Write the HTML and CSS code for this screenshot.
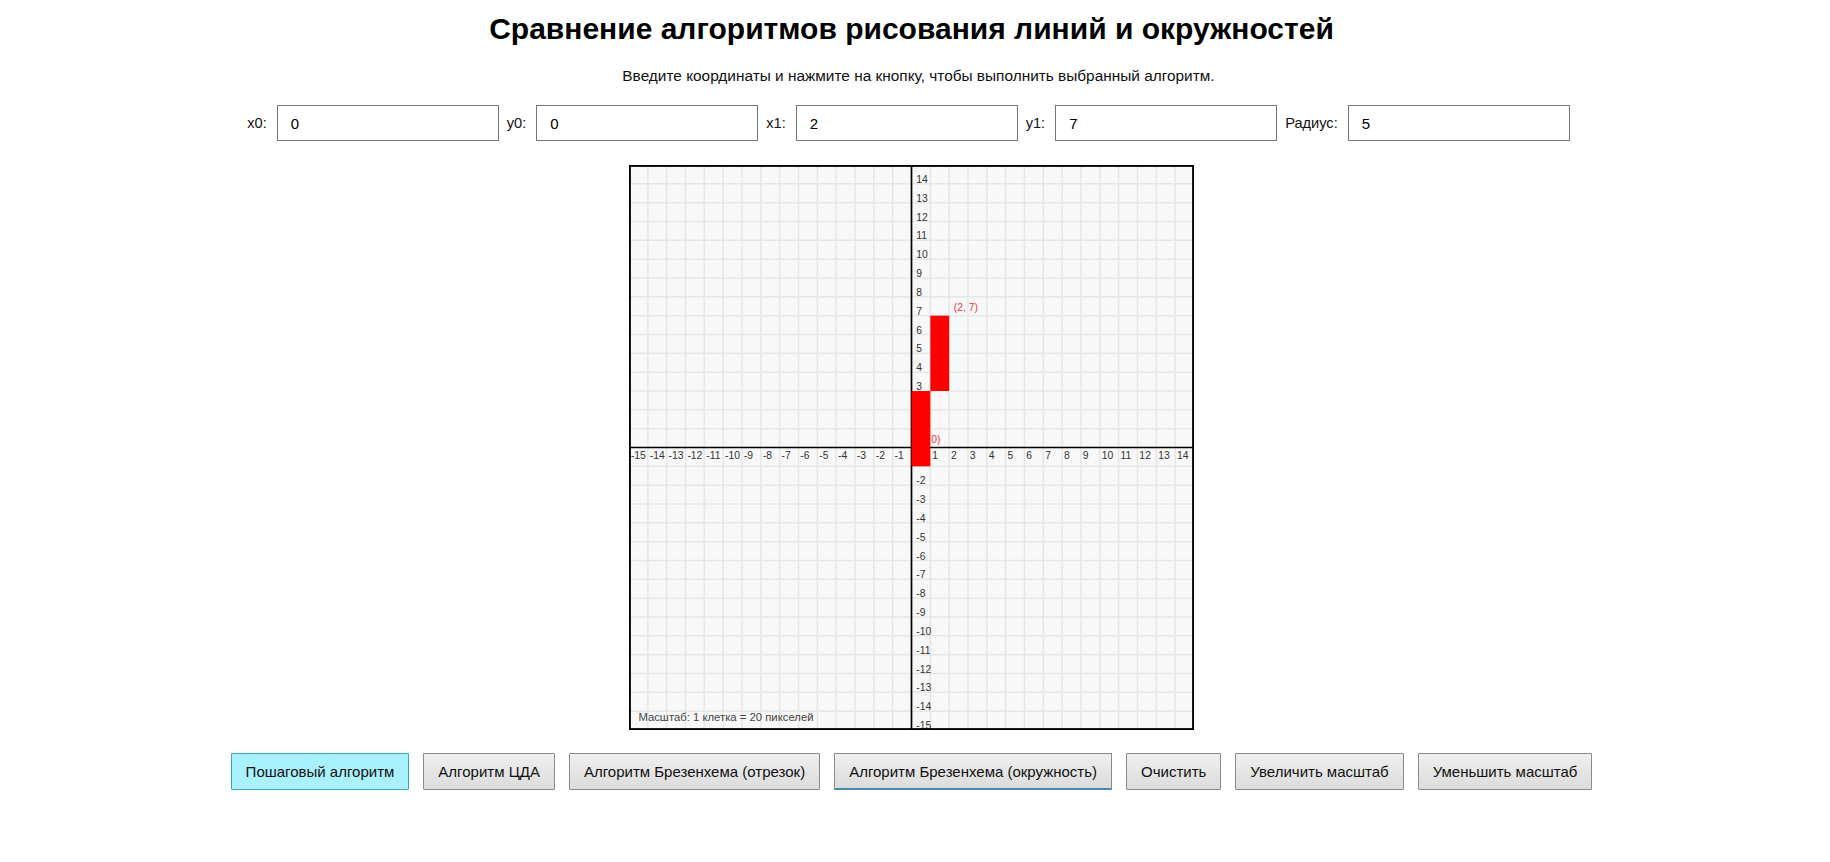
FILE: index.html
```html
<!DOCTYPE html>
<html lang="ru">
<head>
<meta charset="utf-8">
<title>Сравнение алгоритмов</title>
<link rel="stylesheet" href="styles.css">
</head>
<body>
<div class="page">
  <h1 class="title">Сравнение алгоритмов рисования линий и окружностей</h1>
  <p class="subtitle">Введите координаты и нажмите на кнопку, чтобы выполнить выбранный алгоритм.</p>
  <div class="inputs">
    <label class="lbl">x0:</label><input class="field" type="text" value="0">
    <label class="lbl">y0:</label><input class="field" type="text" value="0">
    <label class="lbl">x1:</label><input class="field" type="text" value="2">
    <label class="lbl">y1:</label><input class="field" type="text" value="7">
    <label class="lbl">Радиус:</label><input class="field" type="text" value="5">
  </div>
  <div class="canvas-wrap">
    <svg class="plot" viewBox="0 0 600 600" width="565" height="565">
      <rect x="0" y="0" width="600" height="600" fill="#f8f8f8"/>
      <path stroke="#e6e6e6" stroke-width="1.6" fill="none" d="M20 0V600M40 0V600M60 0V600M80 0V600M100 0V600M120 0V600M140 0V600M160 0V600M180 0V600M200 0V600M220 0V600M240 0V600M260 0V600M280 0V600M320 0V600M340 0V600M360 0V600M380 0V600M400 0V600M420 0V600M440 0V600M460 0V600M480 0V600M500 0V600M520 0V600M540 0V600M560 0V600M580 0V600M0 20H600M0 40H600M0 60H600M0 80H600M0 100H600M0 120H600M0 140H600M0 160H600M0 180H600M0 200H600M0 220H600M0 240H600M0 260H600M0 280H600M0 320H600M0 340H600M0 360H600M0 380H600M0 400H600M0 420H600M0 440H600M0 460H600M0 480H600M0 500H600M0 520H600M0 540H600M0 560H600M0 580H600"/>
      <path stroke="#000" stroke-width="1.8" d="M300 0V600M0 300H600"/>
      <g class="ax" font-size="11" fill="#333">
        <text x="2" y="312">-15</text><text x="22" y="312">-14</text><text x="42" y="312">-13</text><text x="62" y="312">-12</text><text x="82" y="312">-11</text><text x="102" y="312">-10</text><text x="122" y="312">-9</text><text x="142" y="312">-8</text><text x="162" y="312">-7</text><text x="182" y="312">-6</text><text x="202" y="312">-5</text><text x="222" y="312">-4</text><text x="242" y="312">-3</text><text x="262" y="312">-2</text><text x="282" y="312">-1</text><text x="302" y="312">0</text><text x="322" y="312">1</text><text x="342" y="312">2</text><text x="362" y="312">3</text><text x="382" y="312">4</text><text x="402" y="312">5</text><text x="422" y="312">6</text><text x="442" y="312">7</text><text x="462" y="312">8</text><text x="482" y="312">9</text><text x="502" y="312">10</text><text x="522" y="312">11</text><text x="542" y="312">12</text><text x="562" y="312">13</text><text x="582" y="312">14</text>
        <text x="305" y="19">14</text><text x="305" y="39">13</text><text x="305" y="59">12</text><text x="305" y="79">11</text><text x="305" y="99">10</text><text x="305" y="119">9</text><text x="305" y="139">8</text><text x="305" y="159">7</text><text x="305" y="179">6</text><text x="305" y="199">5</text><text x="305" y="219">4</text><text x="305" y="239">3</text><text x="305" y="259">2</text><text x="305" y="279">1</text><text x="305" y="299">0</text><text x="305" y="319">-1</text><text x="305" y="339">-2</text><text x="305" y="359">-3</text><text x="305" y="379">-4</text><text x="305" y="399">-5</text><text x="305" y="419">-6</text><text x="305" y="439">-7</text><text x="305" y="459">-8</text><text x="305" y="479">-9</text><text x="305" y="499">-10</text><text x="305" y="519">-11</text><text x="305" y="539">-12</text><text x="305" y="559">-13</text><text x="305" y="579">-14</text><text x="305" y="599">-15</text>
      </g>
      <g class="ax" font-size="11" fill="#e23b3b">
        <text x="305" y="295">(0, 0)</text>
        <text x="345" y="155">(2, 7)</text>
      </g>
      <rect x="300" y="240" width="20" height="80" fill="#ff0000"/>
      <rect x="320" y="160" width="20" height="80" fill="#ff0000"/>
      <text class="ax" x="10" y="590" font-size="12" fill="#444">Масштаб: 1 клетка = 20 пикселей</text>
      <rect x="1" y="1" width="598" height="598" fill="none" stroke="#000" stroke-width="2"/>
    </svg>
  </div>
  <div class="buttons">
    <button class="btn btn-active">Пошаговый алгоритм</button>
    <button class="btn">Алгоритм ЦДА</button>
    <button class="btn">Алгоритм Брезенхема (отрезок)</button>
    <button class="btn btn-focus">Алгоритм Брезенхема (окружность)</button>
    <button class="btn">Очистить</button>
    <button class="btn">Увеличить масштаб</button>
    <button class="btn">Уменьшить масштаб</button>
  </div>
</div>
</body>
</html>
```

FILE: styles.css
```css
html, body {
  margin: 0;
  padding: 0;
  background: #fff;
}
body {
  font-family: "Liberation Sans", Arial, sans-serif;
  color: #000;
}
.page {
  display: flex;
  flex-direction: column;
  align-items: center;
  padding-right: 7px;
}
.title {
  font-size: 30px;
  font-weight: bold;
  line-height: 40px;
  margin: 9px 0 0;
}
.subtitle {
  font-size: 15.4px;
  line-height: 20px;
  margin: 17px 0 0;
  padding-left: 14px;
  color: #111;
}
.inputs {
  display: flex;
  align-items: center;
  justify-content: center;
  margin-top: 19px;
  padding-left: 2px;
  height: 36px;
}
.lbl {
  font-size: 14.6px;
  margin-right: 10px;
  color: #111;
}
.field {
  box-sizing: border-box;
  width: 222px;
  height: 36px;
  margin: 0 8px 0 0;
  padding: 0 13px;
  border: 1px solid #767676;
  border-radius: 0;
  font-family: "Liberation Sans", Arial, sans-serif;
  font-size: 15px;
  color: #000;
  background: #fff;
}
.canvas-wrap {
  margin-top: 24px;
  display: flex;
}
.plot {
  display: block;
}
.ax {
  font-family: "Liberation Sans", Arial, sans-serif;
}
.buttons {
  display: flex;
  justify-content: center;
  gap: 14px;
  margin-top: 23px;
}
.btn {
  box-sizing: border-box;
  height: 37px;
  padding: 0 14px;
  font-family: "Liberation Sans", Arial, sans-serif;
  font-size: 15px;
  color: #111;
  border: 1px solid #8a8a8a;
  border-radius: 1px;
  background: linear-gradient(#efefef, #dcdcdc);
}
.btn-active {
  background: #a9f1fd;
  border-color: #3aa3c2;
}
.btn-focus {
  border-bottom: 2px solid #4b86ad;
}
```
